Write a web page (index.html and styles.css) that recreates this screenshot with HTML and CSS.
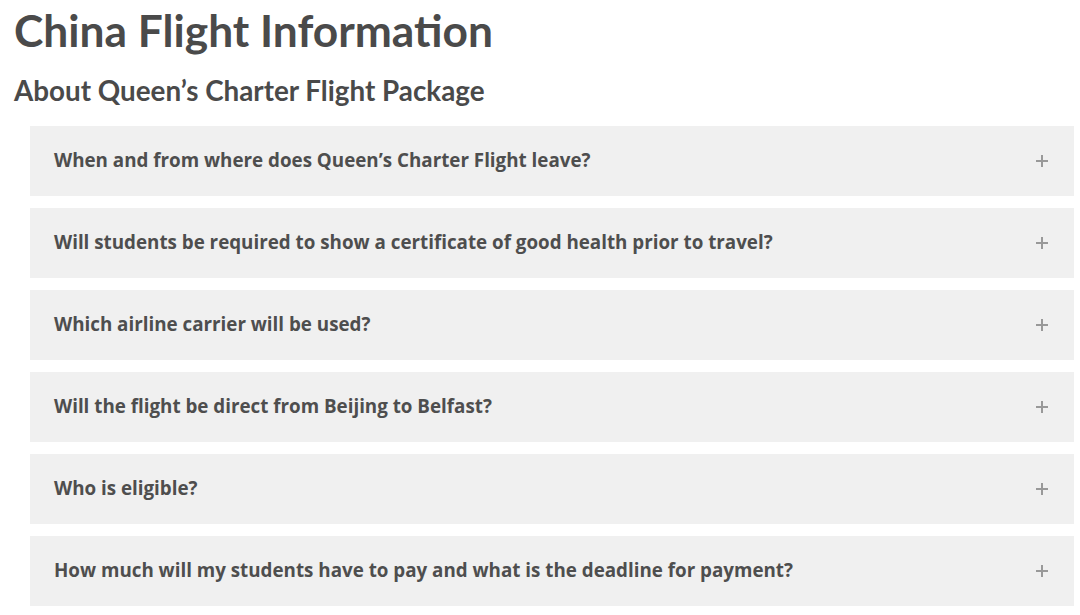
FILE: index.html
```html
<!DOCTYPE html>
<html lang="en">
<head>
<meta charset="utf-8">
<title>China Flight Information</title>
<link rel="stylesheet" href="styles.css">
</head>
<body>
<main class="page">
  <h1 class="title">China Flight Information</h1>
  <h2 class="subtitle">About Queen’s Charter Flight Package</h2>
  <div class="accordion">
    <div class="item"><span class="q">When and from where does Queen’s Charter Flight leave?</span><span class="plus" aria-hidden="true"></span></div>
    <div class="item"><span class="q">Will students be required to show a certificate of good health prior to travel?</span><span class="plus" aria-hidden="true"></span></div>
    <div class="item"><span class="q">Which airline carrier will be used?</span><span class="plus" aria-hidden="true"></span></div>
    <div class="item"><span class="q">Will the flight be direct from Beijing to Belfast?</span><span class="plus" aria-hidden="true"></span></div>
    <div class="item"><span class="q">Who is eligible?</span><span class="plus" aria-hidden="true"></span></div>
    <div class="item"><span class="q">How much will my students have to pay and what is the deadline for payment?</span><span class="plus" aria-hidden="true"></span></div>
  </div>
</main>
</body>
</html>
```
FILE: styles.css
```css
html, body {
  margin: 0;
  padding: 0;
  background: #fff;
}
.page {
  padding: 0 6px 0 14px;
}
.title {
  font-family: Lato, "Noto Sans", sans-serif;
  font-weight: 700;
  font-size: 44.3px;
  line-height: 60px;
  color: #4a4a4a;
  margin: 0;
}
.subtitle {
  font-family: Lato, "Noto Sans", sans-serif;
  font-weight: 700;
  font-size: 27.8px;
  line-height: 40px;
  color: #4a4a4a;
  margin: 11px 0 15px 0;
}
.accordion {
  display: flex;
  flex-direction: column;
  gap: 12px;
  margin-left: 16px;
}
.item {
  display: flex;
  align-items: center;
  justify-content: space-between;
  box-sizing: border-box;
  height: 70px;
  background: #f0f0f0;
  padding: 0 26px 2px 24px;
}
.q {
  font-family: "Open Sans", sans-serif;
  font-weight: 700;
  font-size: 18.8px;
  color: #4e4e4e;
}
.plus {
  position: relative;
  width: 12px;
  height: 12px;
  margin-top: 2px;
  flex: none;
}
.plus::before,
.plus::after {
  content: "";
  position: absolute;
  background: #999;
}
.plus::before {
  left: 0;
  top: 5px;
  width: 12px;
  height: 2px;
}
.plus::after {
  top: 0;
  left: 5px;
  width: 2px;
  height: 12px;
}
```
